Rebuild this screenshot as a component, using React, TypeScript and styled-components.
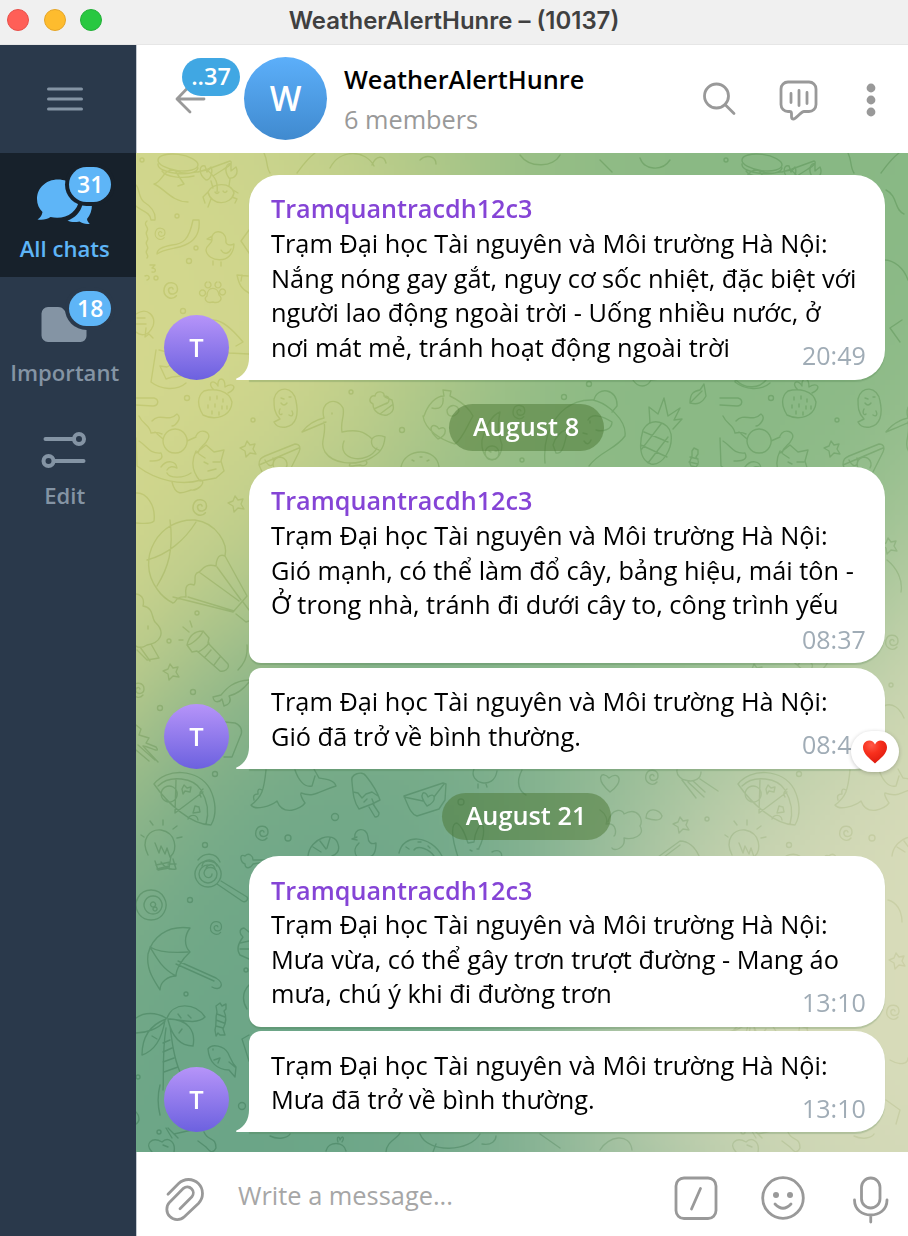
import React, { useEffect, useRef } from "react";
import styled, { createGlobalStyle, css } from "styled-components";

const GlobalStyle = createGlobalStyle`
  * { box-sizing: border-box; }
  body { margin: 0; background: #fff; }
`;

const Window = styled.div`
  width: 908px;
  height: 1236px;
  display: flex;
  flex-direction: column;
  overflow: hidden;
  font-family: "Open Sans", "Noto Sans", sans-serif;
  color: #000;
`;

const TitleBar = styled.header`
  height: 45px;
  flex: none;
  display: grid;
  grid-template-columns: 130px 1fr 130px;
  align-items: center;
  background: #f0f0f0;
  border-bottom: 1px solid #e6e6e6;
  padding-bottom: 4px;
`;

const Lights = styled.div`
  display: flex;
  gap: 14.5px;
  padding-left: 7px;
`;

const Light = styled.span<{ $fill: string; $edge: string }>`
  width: 22px;
  height: 22px;
  border-radius: 50%;
  background: ${(p) => p.$fill};
  border: 1px solid ${(p) => p.$edge};
`;

const WindowTitle = styled.h1`
  margin: 0;
  padding-top: 2px;
  text-align: center;
  white-space: nowrap;
  font: 600 23.95px/28px Inter, sans-serif;
  color: #404040;
`;

const Body = styled.div`
  flex: 1;
  min-height: 0;
  display: flex;
`;

const Sidebar = styled.nav`
  width: 136px;
  flex: none;
  background: #2a394b;
  color: #8494a4;
`;

const MenuButton = styled.div`
  height: 108px;
  padding-right: 7px;
  display: flex;
  align-items: center;
  justify-content: center;
`;

const Folder = styled.div<{ $active?: boolean }>`
  --tab: ${(p) => (p.$active ? "#17212b" : "#2a394b")};
  height: 123.5px;
  padding: 14px 6.5px 0 0;
  display: flex;
  flex-direction: column;
  align-items: center;
  background: var(--tab);
  color: ${(p) => (p.$active ? "#5eb5f7" : "#8494a4")};
`;

const FolderIcon = styled.div`
  position: relative;
  width: 94px;
  height: 64px;
  svg { display: block; }
`;

const FolderLabel = styled.span`
  font-size: 22.1px;
  line-height: 34px;
  font-weight: 600;
`;

const FolderBadge = styled.span`
  position: absolute;
  left: 51.5px;
  top: 0;
  width: 42px;
  height: 35px;
  border-radius: 18px;
  background: #5eb5f7;
  box-shadow: 0 0 0 4px var(--tab);
  color: #fff;
  font-size: 23px;
  line-height: 34px;
  font-weight: 600;
  text-align: center;
`;

const Main = styled.main`
  flex: 1;
  min-width: 0;
  display: flex;
  flex-direction: column;
`;

const ChatHeader = styled.div`
  height: 108px;
  flex: none;
  display: flex;
  align-items: center;
  padding: 0 31px 2px 37px;
  background: #fff;
  border-left: 1px solid #c3c9d0;
`;

const Back = styled.div`
  position: relative;
  width: 70px;
  height: 40px;
  svg { display: block; }
`;

const BackBadge = styled.span`
  position: absolute;
  left: 8px;
  top: -20px;
  width: 58px;
  height: 38px;
  border-radius: 19px;
  background: #40a7e3;
  color: #fff;
  font-size: 23.5px;
  line-height: 37px;
  font-weight: 600;
  text-align: center;
`;

const Avatar = styled.div<{ $size: number; $tone: "blue" | "violet" }>`
  width: ${(p) => p.$size}px;
  height: ${(p) => p.$size}px;
  flex: none;
  border-radius: 50%;
  display: flex;
  align-items: center;
  justify-content: center;
  color: #fff;
  font-weight: 600;
  ${(p) =>
    p.$tone === "blue"
      ? css`
          background: linear-gradient(#5caffa, #408acf);
          font-size: 33.5px;
        `
      : css`
          background: linear-gradient(#b694f9, #6c61df);
          font-size: 25.5px;
          padding-bottom: 1px;
        `}
`;

const Heading = styled.div`
  flex: 1;
  padding: 2px 0 0 17px;
  white-space: nowrap;
`;

const ChatName = styled.div`
  font-size: 25.25px;
  line-height: 40px;
  font-weight: 600;
`;

const ChatMeta = styled.div`
  font-size: 25.3px;
  line-height: 40px;
  color: #999;
`;

const HeaderActions = styled.div`
  display: flex;
  align-items: center;
  gap: 39px;
  padding-top: 4px;
  svg { display: block; }
  svg:last-child { margin-left: 6px; }
`;

const Chat = styled.section`
  position: relative;
  isolation: isolate;
  flex: 1;
  min-height: 0;
  padding-top: 22px;
  display: flex;
  flex-direction: column;
  box-shadow: inset 0 1px 0 rgba(0, 0, 0, 0.15), inset 0 -1px 0 rgba(0, 0, 0, 0.15), inset 1px 0 0 rgba(60, 80, 100, 0.35);
  overflow: hidden;
`;

const GradientCanvas = styled.canvas`
  position: absolute;
  inset: 0;
  width: 100%;
  height: 100%;
  z-index: -2;
`;

const Doodles = styled.svg`
  position: absolute;
  inset: 0;
  z-index: -1;
  mix-blend-mode: soft-light;
  opacity: 0.38;
`;

const DateRow = styled.div`
  display: flex;
  justify-content: center;
  padding: 24px 0 16px 9px;
`;

const DatePill = styled.span`
  height: 47px;
  padding: 0 24.5px 0 23.5px;
  border-radius: 24px;
  background: rgba(73, 117, 49, 0.5);
  color: #fff;
  font-size: 25.3px;
  line-height: 45px;
  font-weight: 600;
`;

const MessageGroup = styled.div`
  display: flex;
  align-items: flex-end;
  gap: 20px;
  padding-left: 28px;
`;

const Bubbles = styled.div`
  width: 636px;
  display: flex;
  flex-direction: column;
  gap: 4.5px;
`;

const Bubble = styled.article<{ $first?: boolean; $last?: boolean; $timeBelow?: boolean }>`
  position: relative;
  display: flex;
  flex-direction: column;
  padding: 16.4px 18px ${(p) => (p.$timeBelow ? "7.6px" : "7.7px")} 22px;
  background: #fff;
  border-radius: ${(p) => (p.$first ? 30 : 12)}px 30px 30px ${(p) => (p.$last ? 0 : 12)}px;
  box-shadow: 0 1.5px 1px rgba(60, 110, 60, 0.22);
`;

const Tail = styled.svg`
  position: absolute;
  left: -13px;
  bottom: 0;
`;

const Sender = styled.div`
  font-size: 25.2px;
  line-height: 34.6px;
  font-weight: 600;
  color: #8544d6;
`;

const Line = styled.div`
  font-size: 25.33px;
  line-height: 34.6px;
  white-space: nowrap;
`;

const Time = styled.time<{ $below?: boolean }>`
  align-self: flex-end;
  width: 65px;
  margin-top: ${(p) => (p.$below ? "0" : "-26px")};
  font-size: 25px;
  line-height: 34px;
  color: #a0acb6;
  white-space: nowrap;
`;

const Reaction = styled.span`
  position: absolute;
  right: -14px;
  bottom: -3px;
  width: 48px;
  height: 41px;
  border-radius: 21px;
  background: #fff;
  box-shadow: 0 1px 4px rgba(0, 0, 0, 0.22);
  display: flex;
  align-items: center;
  justify-content: center;
`;

const Compose = styled.footer`
  height: 84px;
  flex: none;
  display: flex;
  align-items: center;
  background: #fff;
  padding: 10px 17.5px 0 23px;
  border-left: 1px solid #c3c9d0;
  svg { display: block; flex: none; }
`;

const Placeholder = styled.div`
  flex: 1;
  padding: 0 0 8px 30px;
  font-size: 25.4px;
  line-height: 34px;
  color: #a6a6a6;
`;

const ComposeActions = styled.div`
  display: flex;
  gap: 39.5px;
  padding-top: 1px;
`;

const COLORS = [
  [219, 221, 187],
  [107, 165, 135],
  [213, 216, 141],
  [136, 184, 132],
];
const POINTS = [
  [0.8, 0.9],
  [0.35, 0.75],
  [0.2, 0.1],
  [0.65, 0.25],
];

/* Four-point mesh gradient with a slight swirl around the centre. */
function Gradient() {
  const ref = useRef<HTMLCanvasElement>(null);
  useEffect(() => {
    const ctx = ref.current?.getContext("2d");
    if (!ctx) return;
    const w = 154;
    const h = 200;
    const image = ctx.createImageData(w, h);
    for (let y = 0; y < h; y++) {
      for (let x = 0; x < w; x++) {
        const cx = x / w - 0.5;
        const cy = y / h - 0.5;
        const swirl = 0.35 * Math.hypot(cx, cy);
        const theta = swirl * swirl * 6.4;
        const s = Math.sin(theta);
        const c = Math.cos(theta);
        const px = Math.min(1, Math.max(0, 0.5 + cx * c - cy * s));
        const py = Math.min(1, Math.max(0, 0.5 + cx * s + cy * c));
        let sum = 0;
        const rgb = [0, 0, 0];
        POINTS.forEach(([qx, qy], i) => {
          const d = Math.max(0, 0.9 - Math.hypot(px - qx, py - qy)) ** 4;
          sum += d;
          COLORS[i].forEach((v, k) => (rgb[k] += v * d));
        });
        const o = (y * w + x) * 4;
        rgb.forEach((v, k) => (image.data[o + k] = v / sum));
        image.data[o + 3] = 255;
      }
    }
    ctx.putImageData(image, 0, 0);
  }, []);
  return <GradientCanvas ref={ref} width={154} height={200} />;
}

const DOTS = [
  [142, 160, 2], [177, 216, 2], [196, 248, 2], [189, 261, 2.5], [156, 278, 2], [183, 311, 2.5],
  [187, 398, 2.5], [253, 420, 2], [351, 392, 2], [402, 430, 2.5], [522, 460, 2], [564, 397, 2.5],
  [589, 384, 2.5], [197, 613, 2], [169, 641, 2], [193, 692, 2.5], [160, 708, 2.5], [215, 774, 2.5],
  [205, 845, 2.5], [335, 817, 3.5], [288, 838, 3], [461, 802, 3], [707, 819, 2], [190, 900, 2.5],
  [186, 994, 2], [242, 1106, 3.5], [246, 970, 2], [138, 1077, 2], [159, 1132, 2], [307, 685, 2],
];

const SPIRALS = [
  [161, 232, 0.8], [172, 288, 1.1], [201, 505, 1.1], [520, 410, 0.95], [139, 688, 1], [263, 831, 1],
  [217, 926, 0.9], [653, 775, 1], [309, 640, 1], [310, 1010, 1],
];

const STARS = [
  [248, 448], [236, 503], [171, 671], [681, 824], [305, 545], [313, 960],
];

const SHAPES = [
  // cap and leaf
  "M158 160a20 8 8 1 0 40 5a20 8 8 1 0-40-5M158 164c-1 10 38 14 40 4M162 171c4 6 20 8 32 5M154 184c8-2 9-14 19-14 14 6 22 2 34 0 10 8 11 14 10 22M154 184c10 4 18 18 34 18M176 172l8 12-6 2M198 172l10-3 22-8c3 1 0 5-6 8l-11 7",
  // crab
  "M208 192c4-10 24-10 26 1-3 13-23 13-26-1M213 188l-2-7M229 186l1-7M206 180c-8-6-7-16-1-14l2 6 4-5c2 4 0 13-5 13M229 178c-6-8-2-16 2-14v7l5-4c3 6-1 12-7 11M208 192l-5 5 2 6M211 199l-3 8M233 190l5 3M232 197l5 2-2 4M215 192q2 3 4 0M223 191q2 3 4 0",
  // ribbons
  "M193 220c-4 20-10 24-21 25-10 2-15 4-15 9 8-6 20-5 28-9 12-5 15-15 14-25zM136 185c4 4 2 12 8 17 8 5 12 10 11 18h-4c0-8-12-10-15-14",
  "M147 221c-5 4 3 6 0 10s3 6 0 10 3 5 0 9 3 5 0 8M150 265h5l-3 3c5 0 4 5 0 4M145 276c4-2 6 3 2 4",
  // chick
  "M212 240c-2-10 13-12 14 0-1 5 4 6 8 4-1 22-27 18-28 6 0-5 6-6 6-10l-5-1 5-3M213 261v4M221 262v4M221 250c3 5 8 4 10-1",
  "M249 230l-8 11 8 12M248 276l-11-1c2 9 4 14 12 18M242 275l-1 6",
  // paw
  "M207 296c0-10 11-10 12-1 5 4 0 9-6 7-8 2-9-4-6-6M202 290a3 3 0 1 0 1 0M207 282a3 3 0 1 0 2 0M217 282a3 3 0 1 0 2 0M222 289a3 3 0 1 0 1 0",
  "M136 314c12-8 20 3 17 12-5 12-14 9-17 6M146 328l-1 9 4-3 4 4M137 318h8M136 324h10M213 320c10 0 20 10 30 22l-7 4M222 345l7 8 20 1M156 350l-5 32c10 8 26 9 35 1M159 350l8 2M160 366l7 1 7-4 1 7 6 6-9 1-6 2z",
  // strawberry
  "M204 391c-8 6-6 16-1 24 12 6 28 2 29-13-3-12-18-14-28-11M214 390c-8-7 0-12 4-4-1-9 7-10 7 1 9-6 13 2 3 6M210 397v3M217 396v3M223 399v3M208 405v3M215 404v3M222 406v3M212 411v3M219 412v3M227 406v3",
  // sleeping cat
  "M136 398l18 0c6 2 4 8-1 8l-17-1M139 416c4 9 10 8 12 17 5-1 9 0 11 1M152 421c8-9 16 2 25-7 6 4-2 12-5 12M155 432l8 7M175 429a12 12 0 1 0 .2 0M196 436c4-9 16-4 12 3-3 7-8 6-10 14M187 441l9-4M139 441c8 5 10 13 22 12 4 8-6 8-11 8M136 438l1 28c20 15 45 20 64 14M196 453l10-8 8 7 10-2-3 11 3 10-8 7-16 3c-10-12-8-22-4-30M205 458l-6-4M213 462h7M204 462l4 2M208 471l8-2M161 467c6-8 15-6 16 1-4-2-8-2-10 2M167 473c3 6 17 5 24 0M172 482c4 16 12 10 19 8 7 1 14-7 11-9",
  "M136 493c10-1 20 12 18 28-4 4-14 2-18 2",
  // hot-air balloon
  "M157 589c-22-30 2-71 38-69 22 3 33 24 30 36-8-4-9 8-9 10-11-3-14 4-17 6-7 2-2 10-5 13-11-4-8 10-8 12-12-1-9 6-13 6-6-3-12-8-16-14M147 560c20-5 38-20 49-38M170 520c4 30-2 48-13 66M225 556l22 40-14 16-60-15M217 567l24 33M199 572l40 29M188 597l46 14M236 614l10 8 3-1M243 602l6 8",
  // broccoli and flashlight
  "M136 594c8 1 8 8 7 12 12 2 8 14 13 17 10 10 4 20-9 22-6 4-10 2-11 1M137 650l10 10 12-2-8-14M140 647l10 14M148 626v3",
  "M187 645c2-9 7-14 16-14l6 7-1 5 20 21c2 5-4 8-8 7l-23-20-5 1zM187 645c4 0 14-8 16-14M198 652c3-1 9-6 11-9M205 657l6-7M214 665l6-8M190 621l2 6M183 627l6 5M179 640h4M247 645c1 10-2 18-9 25",
  // ghost
  "M274 399c3-14 20-13 22 2 3 14 0 24-10 26-6 1-10-1-12-5l6-3c-6-6-6-12-6-20M281 398l3 1M289 397h2M281 403q3 4 6 0M280 409c-2 4 0 7 2 5M292 411c2 4 0 6-3 4",
  // pizza wedge
  "M259 465c0-6 2-7 6-9l30-12c5 0 6 4 4 8l-11 22M263 474l-4-9 40-17M265 460c5 10 10 5 8-2M276 470a7 7 0 1 1 10-2",
  // big bird
  "M326 422l-24 10c6-8 13-12 22-14M324 418c-5-17 13-22 19-10 2 8-3 14-1 24 14-3 22-1 30 7 3-4 8-4 13-2-1 12-6 17-16 22-15 7-36 5-44-7-6-10 2-17-1-30M372 439c-2 6 2 10 7 11M344 441c-8 20 24 24 33 7M350 464c-3 4 6 1 10 1 6 2 8-2 6-4M332 413v1",
  // bee and leaf
  "M373 404c-6-3-2-9 2-8 1-6 10-5 9 0 7 0 6 7 1 8M373 404c0 8 8 12 14 11 8-3 7-8 5-15l-7-3M374 409l13-6M380 414l12-9",
  // patterned fish
  "M424 416c4-12 12-20 20-20l-1-6 8 1-1 5c12 6 20 14 23 20-6 10-10 22-18 28-14-4-30-14-32-28M432 408c8 2 12-2 11-10M447 410c0 8 8 8 12 1-1-6-8-8-12-1M438 439c-14-13-3-17 1-10 8-5 9 6-1 10",
  "M401 467c4-20 36-20 38 0M412 460l2 1M420 457h2M427 461l2-1M482 440c4-14 10-25 18-28-3 16-2 20 2 33-1 22-22 18-20-5M492 446a7 7 0 1 0 .1 0M489 451l2 1M495 451h2",
  // panda
  "M545 463c-3-34 16-64 48-63 14 3 34 20 32 36-10 14-25 15-36 30M594 400c3-14 24-12 23 6l-5 6M588 420c4-8 16-3 24 2 0 8-10 10-16 8M553 445c3-10 8-14 15-16-3 10-4 26-12 24zM584 441q4 6 7-1M590 421v2M583 433l4 1",
  // pineapple
  "M643 430c8-14 26-8 28 4 2 14-8 32-20 30-12-4-12-20-8-34M650 423l-1-16 9 7 6-16 4 18 12-8-6 12 8-1-9 10M641 445l26 12M644 432l24 10M648 463l20-26M641 450l20-26",
  "M690 403c0-10 4-12 10-13l4-6 2 12c-4 7-8 9-16 7M690 403l12-12M692 451l2-3 4 2v4l-2 3c3 3 3 7 0 10l-5-1c-2-4-1-6 1-9zM690 457l8 2M689 462l9 2M633 380c5 8 14 8 18 0l9-1M736 380c9 10 24 8 30 0",
  // whale
  "M249 680c-16 1-22 8-28 15l-8 2c1 7 7 5 9 2l2 7c5-1 8-5 5-10 8-2 14-6 20-14M225 722l10 1c7 3 8 9 5 14l-8 20h-8",
  // squid
  "M136 725l5 4-2 6 10 3-3 5 10 4c6 8-10-2-13-1l15 16M138 745l17 15M136 750l13 11",
  // large pizza slice
  "M154 784c12-16 44-16 56 5 6 12 7 26 1 36-20 0-44-22-57-41M158 786c12-12 36-8 43 4 6 10 9 20 5 34M176 780l-1 33 28-21M173 787a8 8 0 1 0 .1 14a8 8 0 0 0-.1-14M184 785l3 3 4-1-1 5-5-1-2 3-1-5zM195 806l4 1 1 5-7 1zM201 797q-3-4 2-8M188 819c2-5 9-5 10 1",
  // dinosaur
  "M266 770c-2 20-4 27-15 35 4 6 20 1 26-4 6 16 24 8 28 2-3-4-5-9-4-10 14 5 18-2 35-7-2-6-10-7-17-8l-5-9M295 770c3 9 9 18 17 16l3-10M262 790q-5-3-4 4-6 0-4 6",
  // popsicle
  "M352 782c-2-8 10-12 14-6 8 10 12 18 14 24l-8 4-13 5c-6-8-6-18-7-27M353 792l5 1 4 5 4-4 6-2 6 4M369 807l6 10c4 0 4-2 4-4l-6-9M364 802l3-3M372 799l2 5",
  // envelope
  "M404 796l39-13 3 1-1 16-6 9-22 7c-6-2-8-8-13-20M404 797l19 4M444 784l-10 13M427 806c-10-13-2-17 1-9 7-6 10 4-1 9",
  "M474 769c-6 14 20 22 23 2M478 784v4M486 784l1 3M522 770c-7 13-2 22 4 25",
  // light bulb
  "M148 855c-8-16 2-26 13-25 16 3 16 20 10 26l-2 12-11 2-3-9M155 843l4 10 2-7 4 8 2-6 3 9M156 865l14-3M157 869l12-3M153 825l-3-4M163 825v-5M173 829l4-3M177 838l5-1M141 835l3 2",
  // croissant, chick, donut, bunny, bone
  "M308 856c2-18 26-26 30-12 2 6-1 10-6 12M320 841l6 8M330 838l-3 10M313 847l8 5M355 838c-2-10 12-12 13-1 0 5 3 8 8 6 0 12-4 14-8 14h-11c-4-6-2-10 2-14M357 840l-5-1 5-2M399 853c4-20 32-18 43 3M414 850c4-6 16 0 20 6M406 847l3 2M418 842h3M428 846l2 2M458 857c-8-24-6-34-1-34 6 4 8 12 11 20l6-1c1-10 6-20 9-16 2 8-2 18-4 22M470 850l2 1M477 849h2M492 852c8-4 12 2 8 8M245 856c-6-3-5 6 0 8 0 6 6 4 8 0l18-3M245 856c4-4 8 0 8 4l16 0M198 860c6-8 18-8 22 2M202 866c2-8 12-8 15 0M206 868c3-5 8-4 9 1",
  // clouds, heart, jellyfish, bean, shoe
  "M600 810c6 4 8 10 6 14 12-2 10 12 8 12M608 822c4-16 16-12 16-8 14-8 20 6 16 12 6 10-8 14-16 12 2 10-10 14-12 10M610 792c-16-14-8-22-1-14 10-8 16 4 1 14M677 770c-1 6 6 10 8 10 10 3 16-2 16-8M682 780l14 18M688 782l16 15M693 781l12 11M700 779l18 12M646 818c0-12 14-9 16-2-1 6-10 4-16 2M658 857l22-16c8 0 15 6 19 15M660 860l20-15",
  "M161 862c4 6 10 8 15 7l-3-10M168 864l8 0",
  // lollipop
  "M208 861a13 13 0 1 0 .1 0M208 865a9 9 0 1 0 9 9c0-8-12-9-13-1 1 6 8 6 8 1M221 881l26 16c2 3-2 6-5 4l-25-17",
  // eight ball
  "M151 890a15 15 0 1 0 .1 0M153 896a9 9 0 1 0 .1 0M153 902a2.500 2.500 0 1 0 .1 0M155 907a2 2 0 1 0 .1 0",
  // umbrella
  "M190 928c-24-3-38 10-42 26-2 16 6 26 12 36 0-8 8-14 16-14 0-6 5-16 14-24-6-6-6-16 0-24M150 947c10 6 24 6 38 5M150 947c6 10 12 22 26 29M178 961l38 17c10 6 4 14-4 9M176 964l38 17",
  // ornament, candy
  "M249 932l-5-4c-6 1-4 7-1 9-6 8-6 14-3 18l9 4M240 943l9-2M240 949h9M220 1003l2 3 4-2v5l-2 2c3 6 2 12-1 18l2 6-5 0-2-2-2 3-1-6c2-6 0-12 2-18l-1-6zM217 1014l8 3M216 1020l8 3M216 1026l7 2M249 985c-8 8-6 18-2 24M249 1035l-7 4 7 22",
  // palm tree
  "M167 1018c6-16 28-16 38-1-8 8-24 3-35 2M168 1019c20 0 28 12 25 27-16 0-22-14-25-26M166 1019c-16 6-24 18-24 36 12-4 20-16 23-35M166 1018c-10-6-22-6-30 0M136 1033c10 0 22-4 29-12M166 1028c-4 24-2 50-3 62M170 1026c2 16 4 32 10 46M163 1043l7-3M163 1052l9-4M163 1062l11-4M164 1072l14-5M178 1014l3 4M188 1015l3 3M182 1029l-3 4M152 1036l5 3M160 1085c-3 12-2 22 0 30M166 1128l6 10",
  // fish
  "M208 1049c4-6 16-3 20 4 3 6 4 10 8 14l-1 10-6-7c-12 0-20-8-21-21M213 1049v1M214 1060l6-2-2 5M229 1062l6 5",
  // dog at the bottom
  "M152 1152c-8-8 0-16 10-10 6-6 14 0 12 10M163 1145l5 2M168 1128l10 10M174 1134l18-4M204 1132c4 10 12 4 12 16-4 8-8 1-10-1l-8-6M136 1112c4 4 4 10 0 12M270 1136c8 4 18 2 20-2M326 1151c2-10 18-10 20 0M338 1142c-2-6 2-6 2-2 2-5 5-3 2 2M386 1152c0-10 12-14 14-19M420 1134c8 20 50 18 60 0M436 1144l-3 8M482 1144c10 2 14-4 14-8M540 1134l20 14M600 1150c8-14 30-18 32 0",
  // pieces along the right edge
  "M302 190c12 6 8 20 18 24M300 260c10 0 20 8 24 20M318 320l-12 8 10 14M303 560c10 8 16 20 14 32M300 706c8-4 16 2 20 12M304 900c8 2 14 10 14 22M306 1060c10 6 18 4 18-2M302 1100l14 10-4 14",
  // tops hanging under the header
  "M264 153c4 8 2 14 6 20M315 153c-8 6-12 12-18 20M330 168c10-20 36-18 44-2M372 165c4-10 12-10 14-2M420 160c6-6 16-4 16 4M520 155c10 14 34 12 40 0M600 160l12 12M640 158c4 12 22 14 30 2",
];

const STAR_PATH = "M-1-7l3 4 5-1-2 5 3 5-6-1-4 4-1-6-5-3 5-2z";
const SPIRAL_PATH = "M1 1c-1-3-5-1-4 2 1 4 8 3 8-2 0-7-10-8-12-1-2 8 7 12 11 7";

function Wallpaper() {
  return (
    <>
      <Gradient />
      <Doodles width="772" height="999" viewBox="136 153 772 999" fill="none" stroke="#000" strokeWidth="1.4" strokeLinecap="round" strokeLinejoin="round">
        <defs>
          <g id="doodle-tile">
            {SHAPES.map((d, i) => (
              <path key={i} d={d} />
            ))}
            {DOTS.map(([x, y, r], i) => (
              <circle key={i} cx={x} cy={y} r={r} />
            ))}
            {SPIRALS.map(([x, y, s], i) => (
              <path key={i} d={SPIRAL_PATH} transform={`translate(${x} ${y}) scale(${s})`} />
            ))}
            {STARS.map(([x, y], i) => (
              <path key={i} d={STAR_PATH} transform={`translate(${x} ${y})`} />
            ))}
          </g>
        </defs>
        <use href="#doodle-tile" />
        <use href="#doodle-tile" x="584" />
      </Doodles>
    </>
  );
}

const line = { fill: "none", strokeLinecap: "round", strokeLinejoin: "round" } as const;

const MenuIcon = () => (
  <svg width="38" height="26" {...line} stroke="#8494a4" strokeWidth="3">
    <path d="M2.500 3h33M2.500 13h33M2.500 23h33" />
  </svg>
);

const ChatsIcon = () => (
  <svg width="94" height="64" fill="currentColor">
    <path d="M40 12.500c-12 0-21 8.500-21 19.500 0 5.500 2 9.500 5.500 13-.5 3-2 5.500-5 7.500 5 .8 9.500 0 13-2.500 14 3.500 27.500-4.500 28.500-17.500C61 21 52 12.500 40 12.500z" />
    <path d="M64.500 37.500H74c0 6-2 11-5 14.500.3 2 1.200 3.300 2.800 4.800-4 .6-7.500-.3-10.300-2.300-4.500 1-8.500.8-12-.8 7.500-2.700 13-8.500 15-16.200z" />
  </svg>
);

const FolderGlyph = () => (
  <svg width="94" height="64" fill="currentColor">
    <path d="M30 16h10c3 0 4.800 1 6.500 3.500 2 2.500 3.500 4 6.500 4h9.500a6 6 0 0 1 6 6v15.500a6 6 0 0 1-6 6H30a6.500 6.500 0 0 1-6.500-6.500V22.500a6.500 6.500 0 0 1 6.500-6.500z" />
  </svg>
);

const EditIcon = () => (
  <svg width="94" height="64" {...line} stroke="currentColor" strokeWidth="4">
    <path d="M27.500 25h28M36.500 47h29" />
    <circle cx="61" cy="25" r="5" />
    <circle cx="30.500" cy="47" r="5" />
  </svg>
);

const BackIcon = () => (
  <svg width="34" height="40" {...line} stroke="#999" strokeWidth="2.800">
    <path d="M30 21H3M16 7.500L3 21l13 13" />
  </svg>
);

const SearchIcon = () => (
  <svg width="40" height="40" {...line} stroke="#999" strokeWidth="2.800">
    <circle cx="17.500" cy="16" r="12" />
    <path d="M26 24.500L35 33.500" />
  </svg>
);

const LiveIcon = () => (
  <svg width="42" height="44" {...line} stroke="#999" strokeWidth="2.800">
    <path d="M10 4h21a7 7 0 0 1 7 7v15.500a7 7 0 0 1-7 7H26c-3 0-8 7.500-10.500 7.500-1.500 0-2-1-2-2.500v-3c0-1.500-.7-2-2-2H10a7 7 0 0 1-7-7V11a7 7 0 0 1 7-7zM13 15.500v9M21 12.500v15M29 14.500v11" />
  </svg>
);

const MoreIcon = () => (
  <svg width="12" height="40" fill="#999">
    <circle cx="6" cy="8" r="4.400" />
    <circle cx="6" cy="20" r="4.400" />
    <circle cx="6" cy="32" r="4.400" />
  </svg>
);

const ClipIcon = () => (
  <svg width="48" height="50" {...line} stroke="#999" strokeWidth="2.800">
    <path d="M8 20.200L18.600 9.600A14 14 0 0 1 38.400 29.400L24.350 42.850A10.400 10.400 0 0 1 9.650 28.150L23.450 14.350A6 6 0 0 1 31.900 22.800L20 34.800" />
  </svg>
);

const SlashIcon = () => (
  <svg width="46" height="46" {...line} stroke="#999" strokeWidth="2.800">
    <rect x="2" y="3" width="40" height="40.500" rx="8" />
    <path d="M26.500 13.500l-9 20.500" />
  </svg>
);

const SmileIcon = () => (
  <svg width="46" height="46" {...line} stroke="#999" strokeWidth="2.800">
    <circle cx="24" cy="23" r="20.300" />
    <circle cx="17" cy="20" r="3" fill="#999" stroke="none" />
    <circle cx="31" cy="20" r="3" fill="#999" stroke="none" />
    <path d="M16 29q8 8.500 16 0" />
  </svg>
);

const MicIcon = () => (
  <svg width="46" height="50" {...line} stroke="#999" strokeWidth="2.800">
    <rect x="16.500" y="3" width="18.500" height="30" rx="9.250" />
    <path d="M9.500 25c0 20 32.500 20 32.500 0M25.750 41v6" />
  </svg>
);

const Heart = () => (
  <svg width="26" height="24" viewBox="0 0 26 24">
    <defs>
      <radialGradient id="heart" cx="0.35" cy="0.2" r="0.9">
        <stop offset="0" stopColor="#ff5a48" />
        <stop offset="0.4" stopColor="#f8301d" />
        <stop offset="1" stopColor="#d8150b" />
      </radialGradient>
    </defs>
    <path fill="url(#heart)" d="M13 23.500C7.500 18.500 1 13.500 1 7.500 1 3.500 3.700.5 7.200.5c2.600 0 4.700 1.500 5.800 4 1.100-2.500 3.200-4 5.800-4C22.300.5 25 3.500 25 7.500c0 6-6.500 11-12 16z" />
  </svg>
);

const BubbleTail = () => (
  <Tail width="13" height="22" fill="#fff">
    <path d="M13 0c0 9-4 17-12.500 20.500-.8.5-.5 1.500.5 1.500h12z" />
  </Tail>
);

type Message = { lines: string[]; time: string; timeBelow?: boolean; loved?: boolean };

const STATION = "Trạm Đại học Tài nguyên và Môi trường Hà Nội:";

const Group = ({ messages }: { messages: Message[] }) => (
  <MessageGroup>
    <Avatar $size={65} $tone="violet">T</Avatar>
    <Bubbles>
      {messages.map((m, i) => {
        const last = i === messages.length - 1;
        return (
          <Bubble key={i} $first={i === 0} $last={last} $timeBelow={m.timeBelow}>
            {i === 0 && <Sender>Tramquantracdh12c3</Sender>}
            {m.lines.map((text) => (
              <Line key={text}>{text}</Line>
            ))}
            <Time $below={m.timeBelow}>{m.time}</Time>
            {last && <BubbleTail />}
            {m.loved && (
              <Reaction>
                <Heart />
              </Reaction>
            )}
          </Bubble>
        );
      })}
    </Bubbles>
  </MessageGroup>
);

export default function App() {
  return (
    <Window>
      <GlobalStyle />
      <TitleBar>
        <Lights>
          <Light $fill="#ff5f57" $edge="#e8504a" />
          <Light $fill="#febc2e" $edge="#e5a527" />
          <Light $fill="#28c840" $edge="#23b038" />
        </Lights>
        <WindowTitle>WeatherAlertHunre – (10137)</WindowTitle>
      </TitleBar>
      <Body>
        <Sidebar>
          <MenuButton>
            <MenuIcon />
          </MenuButton>
          <Folder $active>
            <FolderIcon>
              <ChatsIcon />
              <FolderBadge>31</FolderBadge>
            </FolderIcon>
            <FolderLabel>All chats</FolderLabel>
          </Folder>
          <Folder>
            <FolderIcon>
              <FolderGlyph />
              <FolderBadge>18</FolderBadge>
            </FolderIcon>
            <FolderLabel>Important</FolderLabel>
          </Folder>
          <Folder>
            <FolderIcon>
              <EditIcon />
            </FolderIcon>
            <FolderLabel>Edit</FolderLabel>
          </Folder>
        </Sidebar>
        <Main>
          <ChatHeader>
            <Back>
              <BackIcon />
              <BackBadge>..37</BackBadge>
            </Back>
            <Avatar $size={83} $tone="blue">W</Avatar>
            <Heading>
              <ChatName>WeatherAlertHunre</ChatName>
              <ChatMeta>6 members</ChatMeta>
            </Heading>
            <HeaderActions>
              <SearchIcon />
              <LiveIcon />
              <MoreIcon />
            </HeaderActions>
          </ChatHeader>
          <Chat>
            <Wallpaper />
            <Group
              messages={[
                {
                  lines: [
                    STATION,
                    "Nắng nóng gay gắt, nguy cơ sốc nhiệt, đặc biệt với",
                    "người lao động ngoài trời - Uống nhiều nước, ở",
                    "nơi mát mẻ, tránh hoạt động ngoài trời",
                  ],
                  time: "20:49",
                },
              ]}
            />
            <DateRow>
              <DatePill>August 8</DatePill>
            </DateRow>
            <Group
              messages={[
                {
                  lines: [
                    STATION,
                    "Gió mạnh, có thể làm đổ cây, bảng hiệu, mái tôn -",
                    "Ở trong nhà, tránh đi dưới cây to, công trình yếu",
                  ],
                  time: "08:37",
                  timeBelow: true,
                },
                { lines: [STATION, "Gió đã trở về bình thường."], time: "08:4", loved: true },
              ]}
            />
            <DateRow>
              <DatePill>August 21</DatePill>
            </DateRow>
            <Group
              messages={[
                {
                  lines: [
                    STATION,
                    "Mưa vừa, có thể gây trơn trượt đường - Mang áo",
                    "mưa, chú ý khi đi đường trơn",
                  ],
                  time: "13:10",
                },
                { lines: [STATION, "Mưa đã trở về bình thường."], time: "13:10" },
              ]}
            />
          </Chat>
          <Compose>
            <ClipIcon />
            <Placeholder>Write a message...</Placeholder>
            <ComposeActions>
              <SlashIcon />
              <SmileIcon />
              <MicIcon />
            </ComposeActions>
          </Compose>
        </Main>
      </Body>
    </Window>
  );
}
